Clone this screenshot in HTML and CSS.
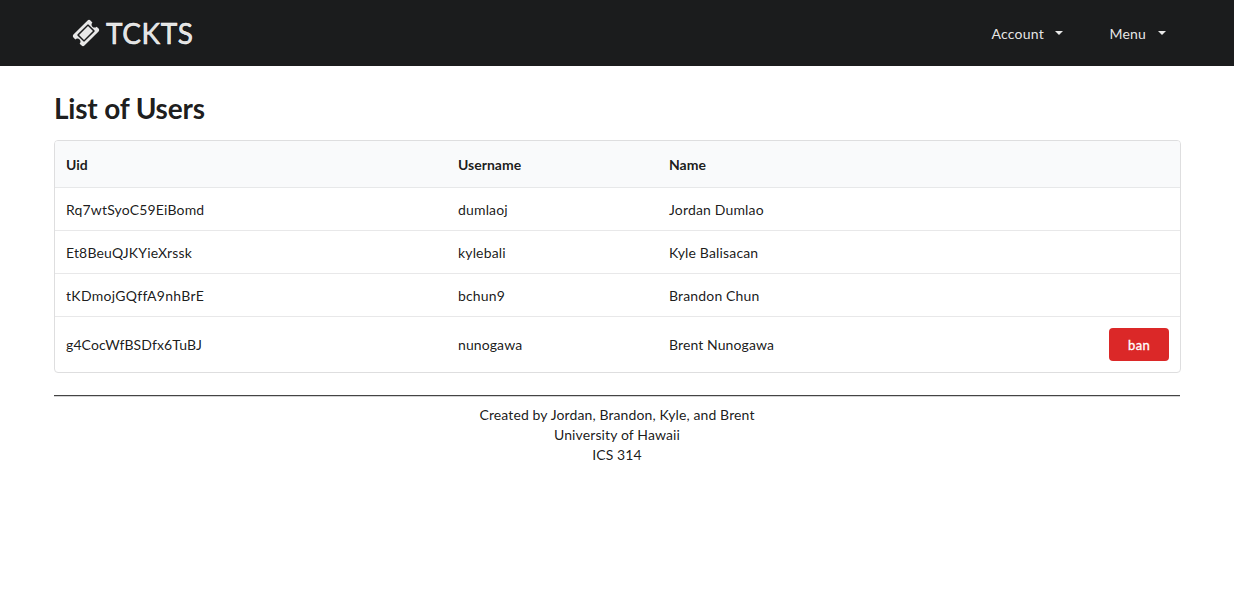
FILE: index.html
```html
<!DOCTYPE html>
<html lang="en">
<head>
<meta charset="utf-8">
<title>TCKTS</title>
<link rel="stylesheet" href="styles.css">
</head>
<body>
<nav class="topbar">
  <a class="brand">
    <svg class="ticket" viewBox="0 0 1792 1792"><path d="M1024 452l316 316-572 572-316-316zm-211 979l618-618q19-19 19-45t-19-45l-362-362q-18-18-45-18t-45 18l-618 618q-19 19-19 45t19 45l362 362q18 18 45 18t45-18zm889-637l-907 908q-37 37-90.500 37t-90.500-37l-126-126q56-56 56-136t-56-136-136-56-136 56l-125-126q-37-37-37-90.500t37-90.500l907-906q37-37 90.500-37t90.500 37l125 125q-56 56-56 136t56 136 136 56 136-56l126 125q37 37 37 90.500t-37 90.500z"/></svg>
    <span>TCKTS</span>
  </a>
  <div class="menus">
    <a class="menu">Account <i class="caret"></i></a>
    <a class="menu">Menu <i class="caret"></i></a>
  </div>
</nav>
<main class="container">
  <h1 class="title">List of Users</h1>
  <table class="users">
    <colgroup><col class="col-uid"><col class="col-username"><col class="col-name"><col></colgroup>
    <thead><tr><th>Uid</th><th>Username</th><th>Name</th><th></th></tr></thead>
    <tbody>
      <tr><td>Rq7wtSyoC59EiBomd</td><td>dumlaoj</td><td>Jordan Dumlao</td><td></td></tr>
      <tr><td>Et8BeuQJKYieXrssk</td><td>kylebali</td><td>Kyle Balisacan</td><td></td></tr>
      <tr><td>tKDmojGQffA9nhBrE</td><td>bchun9</td><td>Brandon Chun</td><td></td></tr>
      <tr><td>g4CocWfBSDfx6TuBJ</td><td>nunogawa</td><td>Brent Nunogawa</td><td class="action"><button class="ban">ban</button></td></tr>
    </tbody>
  </table>
  <footer class="footer">
    <div>Created by Jordan, Brandon, Kyle, and Brent</div>
    <div>University of Hawaii</div>
    <div>ICS 314</div>
  </footer>
</main>
</body>
</html>
```
FILE: styles.css
```css
* { box-sizing: border-box; }
body {
  margin: 0;
  background: #fff;
  color: rgba(0, 0, 0, .9);
  font: 14px/20px Lato, "Liberation Sans", sans-serif;
}
.topbar {
  display: flex;
  justify-content: space-between;
  height: 66px;
  padding: 0 68.5px 0 72px;
  background: #1b1c1d;
  color: rgba(255, 255, 255, .9);
}
.brand {
  display: flex;
  align-items: center;
  gap: 6px;
  font-size: 28px;
  line-height: 28px;
  letter-spacing: .6px;
  -webkit-text-stroke: .6px currentColor;
}
.ticket { width: 28px; height: 28px; fill: currentColor; stroke: none; }
.menus { display: flex; gap: 46px; letter-spacing: .2px; }
.menu { display: flex; align-items: center; padding-top: 2px; }
.caret {
  margin: -2px 0 0 11.500px;
  border: 4px solid transparent;
  border-top-color: currentColor;
  border-bottom: 0;
}
.container { width: 1127px; margin: 0 auto 0 54px; padding-top: 24px; }
.title { margin: 0 0 14px; font-size: 28px; line-height: 36px; font-weight: 700; letter-spacing: -.2px; }
.users {
  width: 100%;
  table-layout: fixed;
  border: 1px solid #dededf;
  border-radius: 4px;
  border-collapse: separate;
  border-spacing: 0;
}
.col-uid { width: 392px; }
.col-username { width: 211px; }
.col-name { width: 360px; }
.users th { height: 47px; padding: 2px 11px 0; background: #f9fafb; border-bottom: 1px solid #e7e8e9; text-align: left; font-weight: 700; }
.users th:first-child { border-top-left-radius: 3px; }
.users th:last-child { border-top-right-radius: 3px; }
.users td { height: 43px; padding: 12px 11px 10px; border-bottom: 1px solid #e8e8e9; letter-spacing: .16px; }
.users tbody tr:nth-child(3) td:first-child { letter-spacing: .3px; }
.users tbody tr:last-child td { height: 55px; padding: 11px; border-bottom: 0; letter-spacing: .1px; }
.users .action { text-align: right; }
.ban {
  display: block;
  width: 60px;
  height: 33px;
  margin-left: auto;
  padding: 1px 0 0;
  border: 0;
  border-radius: 4px;
  background: #db2828;
  color: #fff;
  font: 400 13px/14px Lato, sans-serif;
  letter-spacing: .3px;
  -webkit-text-stroke: .3px currentColor;
}
.footer {
  width: 1126px;
  margin-top: 22px;
  padding-top: 9px;
  border-top: 1px solid #444;
  box-shadow: inset 0 1px #d4d4d5;
  text-align: center;
  letter-spacing: .12px;
}
```
